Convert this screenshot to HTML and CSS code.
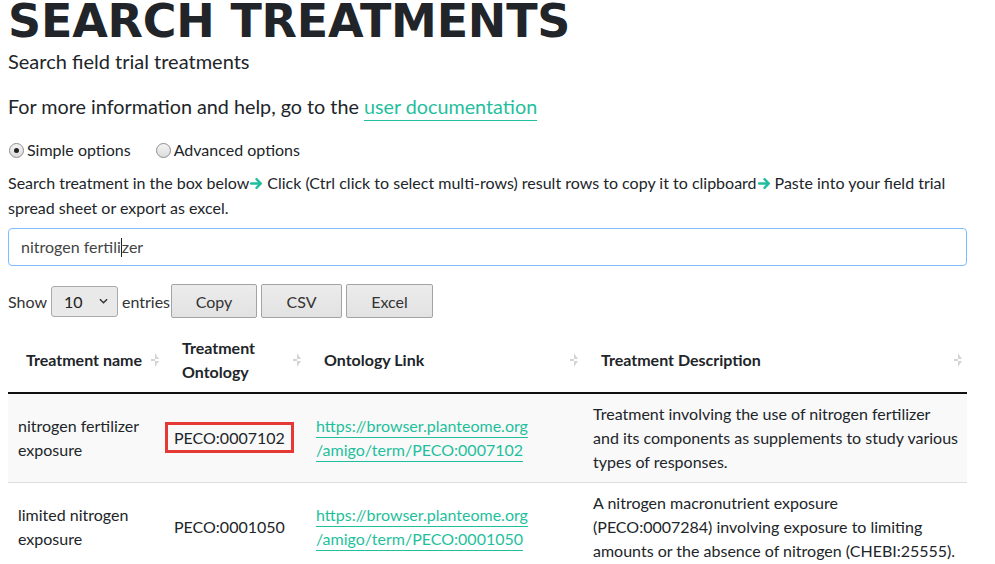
FILE: index.html
```html
<!DOCTYPE html>
<html>
<head>
<meta charset="utf-8">
<link rel="stylesheet" href="styles.css">
</head>
<body>
<main class="page">
<h1 class="title">SEARCH TREATMENTS</h1>
<p class="subtitle">Search field trial treatments</p>
<p class="help">For more information and help, go to the <a class="doc-link" href="#">user documentation</a></p>

<div class="options">
  <label class="opt"><span class="radio checked"></span>Simple options</label>
  <label class="opt"><span class="radio"></span>Advanced options</label>
</div>

<p class="instructions">Search treatment in the box below<svg class="arrow" viewBox="0 0 12 12"><path d="M1 6h9M6 2l4 4-4 4" fill="none" stroke="#1fbf9d" stroke-width="2.2" stroke-linecap="round" stroke-linejoin="round"/></svg>Click (Ctrl click to select multi-rows) result rows to copy it to clipboard<svg class="arrow" viewBox="0 0 12 12"><path d="M1 6h9M6 2l4 4-4 4" fill="none" stroke="#1fbf9d" stroke-width="2.2" stroke-linecap="round" stroke-linejoin="round"/></svg>Paste into your field trial spread sheet or export as excel.</p>

<div class="search-box">nitrogen fertili<span class="caret"></span>zer</div>

<div class="controls">
  <span class="lbl">Show</span>
  <span class="select">10<svg class="chev" viewBox="0 0 10 6"><path d="M1 1l4 4 4-4" fill="none" stroke="#333" stroke-width="1.6"/></svg></span>
  <span class="lbl">entries</span>
  <button class="btn btn-copy">Copy</button>
  <button class="btn btn-csv">CSV</button>
  <button class="btn btn-excel">Excel</button>
</div>

<table class="results">
  <colgroup>
    <col class="c1"><col class="c2"><col class="c3"><col class="c4">
  </colgroup>
  <thead>
    <tr>
      <th>Treatment name</th>
      <th>Treatment Ontology</th>
      <th>Ontology Link</th>
      <th>Treatment Description</th>
    </tr>
  </thead>
  <tbody>
    <tr class="odd">
      <td>nitrogen fertilizer exposure</td>
      <td><span class="highlight">PECO:0007102</span></td>
      <td><a class="onto-link" href="#">https://browser.planteome.org<wbr>/amigo/term/PECO:0007102</a></td>
      <td>Treatment involving the use of nitrogen fertilizer and its components as supplements to study various types of responses.</td>
    </tr>
    <tr>
      <td>limited nitrogen exposure</td>
      <td>PECO:0001050</td>
      <td><a class="onto-link" href="#">https://browser.planteome.org<wbr>/amigo/term/PECO:0001050</a></td>
      <td>A nitrogen macronutrient exposure (PECO:0007284) involving exposure to limiting amounts or the absence of nitrogen (CHEBI:25555).</td>
    </tr>
  </tbody>
</table>
</main>
</body>
</html>
```

FILE: styles.css
```css
html, body {
  margin: 0;
  padding: 0;
  background: #fff;
}
body {
  font-family: Lato, "Open Sans", sans-serif;
  color: #212529;
  overflow: hidden;
  height: 564px;
}
.page {
  display: block;
  width: 959px;
  margin-left: 8px;
}
.title {
  margin: 1px 0 0;
  font-family: "DejaVu Sans", sans-serif;
  font-weight: 800;
  font-size: 46px;
  line-height: 40px;
  letter-spacing: -0.2px;
  color: #212529;
}
.subtitle {
  margin: 8px 0 0;
  font-size: 20px;
  line-height: 24px;
}
.help {
  margin: 21px 0 0;
  font-size: 19.75px;
  line-height: 26px;
}
.doc-link {
  color: #1fbf9d;
  text-decoration: underline;
  text-underline-offset: 6px;
  text-decoration-thickness: 1px;
}
.options {
  margin-top: 18px;
  display: flex;
  gap: 24px;
  font-size: 16px;
  line-height: 24px;
}
.opt {
  display: flex;
  align-items: center;
  gap: 3px;
}
.radio {
  width: 13px;
  height: 13px;
  border: 1px solid #8d8d8d;
  border-radius: 50%;
  background: linear-gradient(#f4f4f4, #dcdcdc);
  display: inline-flex;
  align-items: center;
  justify-content: center;
  margin-left: 1px;
}
.radio.checked::after {
  content: "";
  width: 5px;
  height: 5px;
  border-radius: 50%;
  background: #222;
}
.instructions {
  margin: 8px 0 0;
  font-size: 16px;
  line-height: 25px;
}
.arrow {
  width: 13px;
  height: 13px;
  vertical-align: -1px;
  margin: 0 4px 0 1px;
}
.search-box {
  margin-top: 8px;
  height: 38px;
  box-sizing: border-box;
  border: 1px solid #80bdff;
  border-radius: 4px;
  padding: 0 12px;
  font-size: 16px;
  line-height: 36px;
  color: #444;
}
.caret {
  display: inline-block;
  width: 1px;
  height: 19px;
  background: #222;
  vertical-align: -4px;
}
.controls {
  margin-top: 18px;
  display: flex;
  align-items: center;
  font-size: 16px;
}
.lbl {
  color: #333;
}
.select {
  margin: 0 4px 0 4px;
  width: 67px;
  height: 31px;
  box-sizing: border-box;
  border: 1px solid #aaa;
  border-radius: 3px;
  background: #e9e9e9;
  display: flex;
  align-items: center;
  padding-left: 12px;
  font-size: 16px;
  color: #222;
  gap: 16px;
}
.chev {
  width: 9px;
  height: 6px;
}
.btn {
  margin-left: 4px;
  height: 34px;
  box-sizing: border-box;
  border: 1px solid #a3a3a3;
  border-radius: 2px;
  background: linear-gradient(#ececec, #e2e2e2);
  font-family: Lato, sans-serif;
  font-size: 16px;
  color: #333;
  padding: 0;
}
.btn-copy { width: 86px; margin-left: 1px; }
.btn-csv { width: 81px; }
.btn-excel { width: 87px; }
.results {
  margin-top: 10px;
  width: 959px;
  table-layout: fixed;
  border-collapse: collapse;
  font-size: 16px;
  line-height: 24px;
}
.c1 { width: 156px; }
.c2 { width: 142px; }
.c3 { width: 277px; }
.c4 { width: 384px; }
.results th {
  position: relative;
  text-align: left;
  font-weight: 700;
  padding: 8px 20px 8px 18px;
  border-bottom: 2px solid #111;
  vertical-align: middle;
}
.results th::after {
  content: "";
  position: absolute;
  right: 5px;
  top: 50%;
  width: 8px;
  height: 14px;
  margin-top: -7px;
  clip-path: polygon(50% 0, 100% 42%, 0 42%, 0 58%, 100% 58%, 50% 100%);
  background-color: #d4d4d4;
}
.results td {
  padding: 8px 10px;
  vertical-align: middle;
  border-top: 1px solid #ddd;
}
.results td:last-child {
  padding-right: 7px;
}
.results tbody tr:first-child td {
  border-top: none;
}
.results tr.odd td {
  background: #f9f9f9;
}
.onto-link {
  color: #1fbf9d;
  text-decoration: underline;
  text-underline-offset: 5px;
  text-decoration-thickness: 1px;
}
.highlight {
  position: relative;
}
.highlight::after {
  content: "";
  position: absolute;
  left: -9px;
  right: -9px;
  top: -6px;
  bottom: -6px;
  border: 3px solid #e53935;
}
```
